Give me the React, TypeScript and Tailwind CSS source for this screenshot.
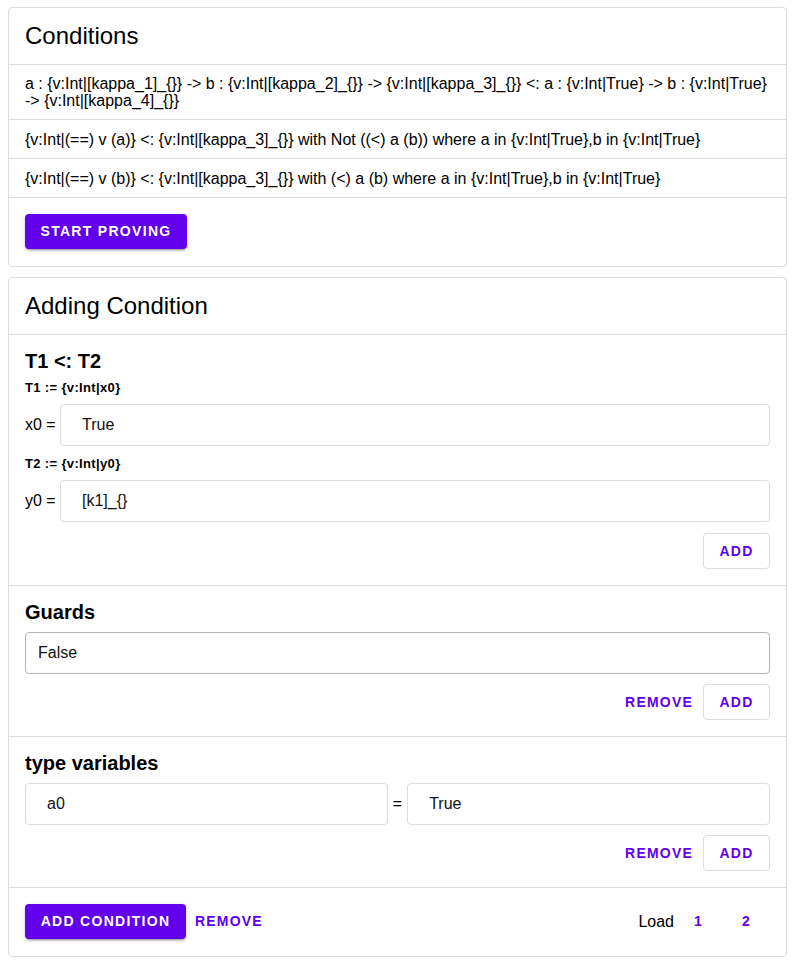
import React from "react";

function Field({ value, className = "" }: { value: string; className?: string }) {
  return (
    <div
      className={
        "h-[42px] rounded-[4px] border border-[#dcdcdc] flex items-center px-[21px] text-[16px] text-[#111] bg-white " +
        className
      }
    >
      {value}
    </div>
  );
}

function OutlinedAdd() {
  return (
    <button className="h-[36px] w-[67px] rounded-[4px] border border-[#dcdcdc] bg-white text-[14px] font-bold tracking-[1.3px] text-[#6200ee] flex items-center justify-center">
      ADD
    </button>
  );
}

function TextRemove() {
  return (
    <button className="h-[36px] px-[8px] text-[14px] font-bold tracking-[1.2px] text-[#6200ee] flex items-center justify-center">
      REMOVE
    </button>
  );
}

export default function App() {
  const font = { fontFamily: '"Liberation Sans", Arial, Helvetica, sans-serif' };
  const shadow =
    "shadow-[0_3px_1px_-2px_rgba(0,0,0,0.2),0_2px_2px_0_rgba(0,0,0,0.14),0_1px_5px_0_rgba(0,0,0,0.12)]";
  return (
    <div className="px-[8px] pt-[7px] pb-[7px] bg-white min-h-screen text-black" style={font}>
      {/* Conditions card */}
      <div className="border border-[#dcdcdc] rounded-[4px] bg-white">
        <div className="px-[16px] py-[12px] text-[24px] leading-[32px] border-b border-[#dcdcdc]">
          Conditions
        </div>
        <div className="px-[16px] py-[10px] text-[16px] leading-[17px] border-b border-[#dcdcdc]">
          a : {"{v:Int|[kappa_1]_{}}"} -&gt; b : {"{v:Int|[kappa_2]_{}}"} -&gt; {"{v:Int|[kappa_3]_{}}"} &lt;: a : {"{v:Int|True}"} -&gt; b : {"{v:Int|True}"} -&gt; {"{v:Int|[kappa_4]_{}}"}
        </div>
        <div className="px-[16px] pt-[11px] pb-[10px] text-[16px] leading-[17px] border-b border-[#dcdcdc]">
          {"{v:Int|(==) v (a)} <: {v:Int|[kappa_3]_{}} with Not ((<) a (b)) where a in {v:Int|True},b in {v:Int|True}"}
        </div>
        <div className="px-[16px] pt-[11px] pb-[10px] text-[16px] leading-[17px] border-b border-[#dcdcdc]">
          {"{v:Int|(==) v (b)} <: {v:Int|[kappa_3]_{}} with (<) a (b) where a in {v:Int|True},b in {v:Int|True}"}
        </div>
        <div className="px-[16px] pt-[16px] pb-[17px]">
          <button className={"h-[35px] w-[162px] rounded-[4px] bg-[#6200ee] text-white text-[14px] font-bold tracking-[1.3px] " + shadow}>
            START PROVING
          </button>
        </div>
      </div>

      {/* Adding Condition card */}
      <div className="mt-[10px] border border-[#dcdcdc] rounded-[4px] bg-white">
        <div className="px-[16px] py-[12px] text-[24px] leading-[32px] border-b border-[#dcdcdc]">
          Adding Condition
        </div>

        <div className="px-[16px] pt-[14px] pb-[16px] border-b border-[#dcdcdc]">
          <div className="text-[20px] leading-[24px] font-bold">T1 &lt;: T2</div>
          <div className="mt-[7px] text-[13px] leading-[15px] font-bold tracking-[0.35px]">{"T1 := {v:Int|x0}"}</div>
          <div className="mt-[9px] flex items-center">
            <span className="w-[35px] text-[16px]">x0 =</span>
            <Field value="True" className="flex-1" />
          </div>
          <div className="mt-[10px] text-[13px] leading-[15px] font-bold tracking-[0.35px]">{"T2 := {v:Int|y0}"}</div>
          <div className="mt-[9px] flex items-center">
            <span className="w-[35px] text-[16px]">y0 =</span>
            <Field value="[k1]_{}" className="flex-1" />
          </div>
          <div className="mt-[11px] flex justify-end">
            <OutlinedAdd />
          </div>
        </div>

        <div className="px-[16px] pt-[14px] pb-[16px] border-b border-[#dcdcdc]">
          <div className="text-[20px] leading-[24px] font-bold">Guards</div>
          <div className="mt-[8px] h-[42px] rounded-[4px] border border-[#b5b5b5] flex items-center px-[12px] text-[16px] text-[#111]">
            False
          </div>
          <div className="mt-[10px] flex justify-end items-center gap-[2px]">
            <TextRemove />
            <OutlinedAdd />
          </div>
        </div>

        <div className="px-[16px] pt-[14px] pb-[16px] border-b border-[#dcdcdc]">
          <div className="text-[20px] leading-[24px] font-bold">type variables</div>
          <div className="mt-[8px] flex items-center gap-[5px]">
            <Field value="a0" className="flex-1" />
            <span className="text-[16px]">=</span>
            <Field value="True" className="flex-1" />
          </div>
          <div className="mt-[10px] flex justify-end items-center gap-[2px]">
            <TextRemove />
            <OutlinedAdd />
          </div>
        </div>

        <div className="px-[16px] pt-[16px] pb-[17px] flex items-center">
          <button className={"h-[35px] w-[161px] rounded-[4px] bg-[#6200ee] text-white text-[14px] font-bold tracking-[1.3px] " + shadow}>
            ADD CONDITION
          </button>
          <button className="ml-[1px] h-[35px] px-[8px] text-[14px] font-bold tracking-[1.2px] text-[#6200ee]">
            REMOVE
          </button>
          <div className="flex-1" />
          <span className="text-[16px]">Load</span>
          <button className="w-[48px] h-[35px] text-[14px] font-bold text-[#6200ee]">1</button>
          <button className="w-[48px] h-[35px] text-[14px] font-bold text-[#6200ee]">2</button>
        </div>
      </div>
    </div>
  );
}
